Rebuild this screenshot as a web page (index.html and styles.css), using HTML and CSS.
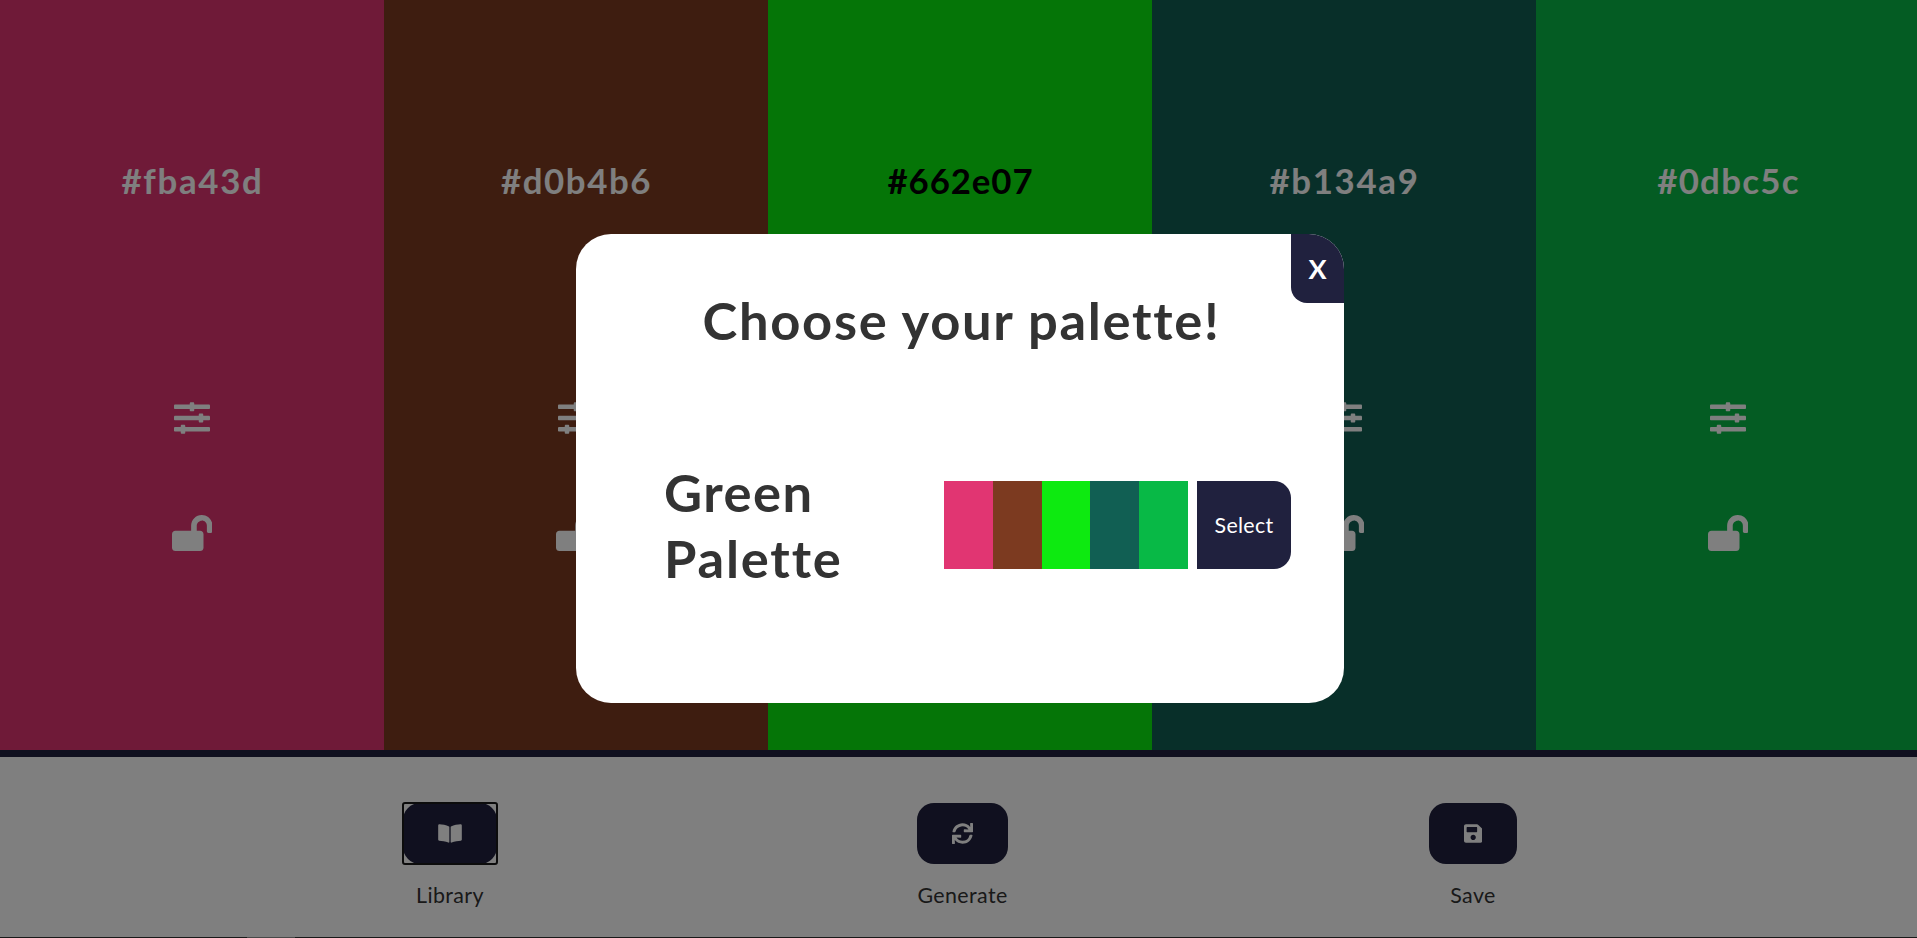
FILE: index.html
```
<!DOCTYPE html>
<html lang="en">
<head>
<meta charset="utf-8">
<title>Palette generator</title>
<link rel="stylesheet" href="styles.css">
</head>
<body>
<svg class="sprite" aria-hidden="true">
  <symbol id="sliders" viewBox="0 0 512 512"><path d="M496 384H160v-16c0-8.8-7.2-16-16-16h-32c-8.8 0-16 7.2-16 16v16H16c-8.8 0-16 7.2-16 16v32c0 8.8 7.2 16 16 16h80v16c0 8.8 7.2 16 16 16h32c8.8 0 16-7.2 16-16v-16h336c8.8 0 16-7.2 16-16v-32c0-8.8-7.2-16-16-16zm0-160h-80v-16c0-8.8-7.2-16-16-16h-32c-8.8 0-16 7.2-16 16v16H16c-8.8 0-16 7.2-16 16v32c0 8.8 7.2 16 16 16h336v16c0 8.8 7.2 16 16 16h32c8.8 0 16-7.2 16-16v-16h80c8.8 0 16-7.2 16-16v-32c0-8.8-7.2-16-16-16zm0-160H288V48c0-8.8-7.2-16-16-16h-32c-8.8 0-16 7.2-16 16v16H16C7.2 64 0 71.2 0 80v32c0 8.8 7.2 16 16 16h208v16c0 8.8 7.2 16 16 16h32c8.8 0 16-7.2 16-16v-16h208c8.8 0 16-7.2 16-16V80c0-8.8-7.2-16-16-16z"/></symbol>
  <symbol id="unlock" viewBox="0 0 576 512"><path d="M423.5 0C339.5.3 272 69.5 272 153.5V224H48c-26.5 0-48 21.5-48 48v192c0 26.5 21.5 48 48 48h352c26.5 0 48-21.5 48-48V272c0-26.5-21.5-48-48-48h-48v-71.1c0-39.6 31.7-72.5 71.3-72.9 40-.4 72.7 32.1 72.7 72v80c0 13.3 10.7 24 24 24h32c13.3 0 24-10.7 24-24v-80C576 68 507.5-.3 423.5 0z"/></symbol>
  <symbol id="book" viewBox="0 0 576 512"><path d="M542.22 32.05c-54.8 3.11-163.72 14.43-230.96 55.59-4.64 2.84-7.27 7.89-7.27 13.17v363.87c0 11.55 12.63 18.85 23.28 13.49 69.18-34.82 169.23-44.32 218.7-46.92 16.89-.89 30.02-14.43 30.02-30.66V62.75c.01-17.71-15.35-31.74-33.77-30.7zM264.73 87.64C197.5 46.48 88.58 35.17 33.78 32.05 15.36 31.01 0 45.04 0 62.75V400.6c0 16.24 13.13 29.78 30.02 30.66 49.49 2.6 149.59 12.11 218.77 46.95 10.62 5.35 23.21-1.94 23.21-13.46V100.63c0-5.29-2.62-10.14-7.27-12.99z"/></symbol>
  <symbol id="sync" viewBox="0 0 512 512"><path d="M440.65 12.57l4 82.77A247.16 247.16 0 0 0 255.83 8C134.73 8 33.91 94.92 12.29 209.82A12 12 0 0 0 24.09 224h49.05a12 12 0 0 0 11.67-9.26 175.91 175.91 0 0 1 317-56.94l-101.46-4.86a12 12 0 0 0-12.57 12v47.41a12 12 0 0 0 12 12H500a12 12 0 0 0 12-12V12a12 12 0 0 0-12-12h-47.37a12 12 0 0 0-11.98 12.57zM255.83 432a175.61 175.61 0 0 1-146-77.8l101.8 4.87a12 12 0 0 0 12.57-12v-47.4a12 12 0 0 0-12-12H12a12 12 0 0 0-12 12V500a12 12 0 0 0 12 12h47.35a12 12 0 0 0 12-12.6l-4.15-82.57A247.17 247.17 0 0 0 255.83 504c121.11 0 221.93-86.92 243.55-201.82a12 12 0 0 0-11.8-14.18h-49.05a12 12 0 0 0-11.67 9.26A175.86 175.86 0 0 1 255.83 432z"/></symbol>
  <symbol id="save" viewBox="0 0 448 512"><path d="M433.941 129.941l-83.882-83.882A48 48 0 0 0 316.118 32H48C21.49 32 0 53.49 0 80v352c0 26.51 21.49 48 48 48h352c26.51 0 48-21.49 48-48V163.882a48 48 0 0 0-14.059-33.941zM224 416c-35.346 0-64-28.654-64-64 0-35.346 28.654-64 64-64s64 28.654 64 64c0 35.346-28.654 64-64 64zm96-304.52V212c0 6.627-5.373 12-12 12H76c-6.627 0-12-5.373-12-12V108c0-6.627 5.373-12 12-12h228.52c3.183 0 6.235 1.264 8.485 3.515l3.48 3.48A11.996 11.996 0 0 1 320 111.48z"/></symbol>
</svg>

<div class="app">
  <main class="colors">
    <section class="color pink"><h2 class="hex">#fba43d</h2><svg class="sliders"><use href="#sliders"/></svg><svg class="lock"><use href="#unlock"/></svg></section>
    <section class="color brown"><h2 class="hex">#d0b4b6</h2><svg class="sliders"><use href="#sliders"/></svg><svg class="lock"><use href="#unlock"/></svg></section>
    <section class="color lime"><h2 class="hex">#662e07</h2><svg class="sliders"><use href="#sliders"/></svg><svg class="lock"><use href="#unlock"/></svg></section>
    <section class="color teal"><h2 class="hex">#b134a9</h2><svg class="sliders"><use href="#sliders"/></svg><svg class="lock"><use href="#unlock"/></svg></section>
    <section class="color green"><h2 class="hex">#0dbc5c</h2><svg class="sliders"><use href="#sliders"/></svg><svg class="lock"><use href="#unlock"/></svg></section>
  </main>
  <footer class="panel">
    <div class="action library"><button class="action-btn focused"><svg class="icon-book"><use href="#book"/></svg></button><p class="label">Library</p></div>
    <div class="action generate"><button class="action-btn"><svg class="icon-sync"><use href="#sync"/></svg></button><p class="label">Generate</p></div>
    <div class="action save"><button class="action-btn"><svg class="icon-save"><use href="#save"/></svg></button><p class="label">Save</p></div>
  </footer>
  <div class="edge"><span class="edge-light"></span></div>
</div>

<div class="overlay">
  <div class="popup">
    <button class="close">X</button>
    <h1 class="title">Choose your palette!</h1>
    <div class="row">
      <h1 class="name"><span class="first-word">Green</span> <span class="last-word">Palette</span></h1>
      <div class="preview"><i class="pink"></i><i class="brown"></i><i class="lime"></i><i class="teal"></i><i class="green"></i></div>
      <button class="select">Select</button>
    </div>
  </div>
</div>
</body>
</html>
```
FILE: styles.css
```
* { margin: 0; padding: 0; box-sizing: border-box; }
html, body { height: 100%; overflow: hidden; }
body { font-family: Lato, "Open Sans", sans-serif; color: #333; background: #fff; }
button { border: none; font-family: inherit; color: #fff; background: #20213e; }
svg { display: block; fill: currentColor; }
.sprite { position: absolute; width: 0; height: 0; }

.app { width: 1920px; height: 938px; display: flex; flex-direction: column; }
.colors { display: grid; grid-template-columns: repeat(5, 384px); height: 750px; }
.color { display: flex; flex-direction: column; align-items: center; color: #fff; padding-top: 159px; }
.pink { background: #e13572; }
.brown { background: #7c3a20; }
.lime { background: #0dea10; }
.teal { background: #115f53; }
.green { background: #08b946; }
.color.pink { background: #de3470; }
.color.lime { background: #0aea0e; }
.hex { font-size: 34.8px; line-height: 44px; height: 44px; font-weight: 700; letter-spacing: 1.7px; padding-left: 1px; }
.brown .hex { letter-spacing: 1.6px; }
.lime .hex { color: #000; letter-spacing: 0.9px; }
.green .hex { letter-spacing: 1.3px; }
.sliders { width: 36px; height: 36px; margin-top: 197px; }
.lock { width: 40.5px; height: 36px; margin-top: 79px; }

.panel { height: 187px; border-top: 7px solid #20213e; padding: 46px 403px 0; display: flex; justify-content: space-between; }
.action { display: flex; flex-direction: column; align-items: center; }
.library { width: 94px; }
.generate { width: 91px; margin-right: 1px; }
.save { width: 88px; }
.action-btn { height: 61px; width: 100%; border-radius: 17px; display: flex; align-items: center; justify-content: center; }
.focused { position: relative; outline: none; }
.focused::after { content: ""; position: absolute; inset: -1px; border: 2px solid #181818; border-radius: 3px; }
.icon-book { width: 24px; height: 21px; }
.icon-sync { width: 21px; height: 21px; }
.icon-save { width: 18.4px; height: 21px; }
.label { margin-top: 17px; font-size: 21.4px; line-height: 28px; font-weight: 400; white-space: nowrap; letter-spacing: 0.4px; }
.edge { height: 1px; background: #333; padding-left: 247px; }
.edge-light { display: block; width: 48px; height: 1px; background: #909090; }

.overlay { position: absolute; inset: 0; background: rgba(0, 0, 0, 0.5); padding: 234px 0 0 576px; }
.popup { position: relative; width: 768px; height: 469px; background: #fff; border-radius: 35px; padding-top: 53px; }
.close { position: absolute; top: 0; right: 0; width: 53px; height: 69px; border-radius: 0 35px 0 16px; font-size: 27px; font-weight: 700; }
.title { text-align: center; font-size: 52.5px; line-height: 66px; font-weight: 700; letter-spacing: 1.7px; padding-left: 3px; }
.row { display: flex; align-items: center; height: 132px; margin-top: 106px; }
.name { width: 280px; margin-left: 88px; font-size: 52.5px; line-height: 66px; font-weight: 700; display: flex; flex-direction: column; align-items: flex-start; }
.first-word { letter-spacing: 1.5px; }
.last-word { letter-spacing: 1.8px; }
.preview { display: grid; grid-template-columns: 49px 49px 48px 49px 49px; height: 88px; }
.select { width: 94px; height: 88px; margin-left: 9px; border-radius: 0 17px 17px 0; font-size: 21.4px; letter-spacing: 0.3px; }
```
